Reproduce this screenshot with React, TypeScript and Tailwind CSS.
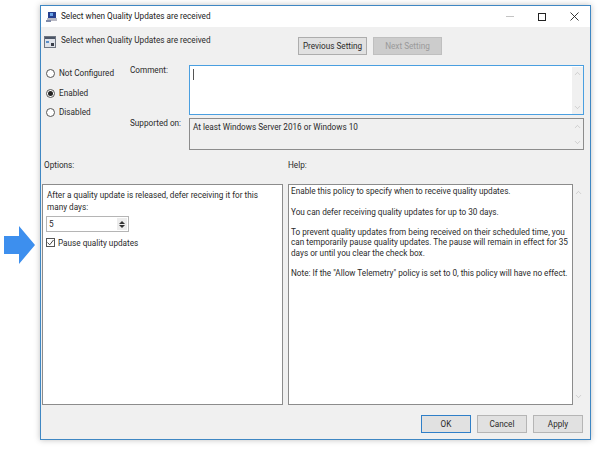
import React from 'react';
import { ChevronUp, ChevronDown } from 'lucide-react';

const Radio = ({ label, checked }: { label: string; checked?: boolean }) => (
  <div className="flex items-center gap-[4px] h-[19.5px]">
    <div className="w-[9px] h-[9px] rounded-full border border-[#555] bg-white flex items-center justify-center">
      {checked && <div className="w-[5px] h-[5px] rounded-full bg-[#222]" />}
    </div>
    <span>{label}</span>
  </div>
);

const ScrollArrows = ({ inset }: { inset: string }) => (
  <div className={`w-[11px] shrink-0 flex flex-col justify-between items-center bg-[#f0f0f0] ${inset}`}>
    <ChevronUp size={9} className="text-[#b4b4b4]" strokeWidth={1.5} />
    <ChevronDown size={9} className="text-[#b4b4b4]" strokeWidth={1.5} />
  </div>
);

const FootButton = ({ label, active }: { label: string; active?: boolean }) => (
  <div className={`w-[50px] h-[18px] flex items-center justify-center bg-[#e1e1e1] border ${active ? 'border-[#2f7fc8]' : 'border-[#b5b5b5]'}`}>
    {label}
  </div>
);

export default function App() {
  return (
    <div className="relative w-[599px] h-[450px] bg-white overflow-hidden pl-[40px] pt-[5px] text-[8.2px] leading-[11px] text-[#2a2a2a]" style={{ fontFamily: 'Roboto, sans-serif' }}>
      {/* arrow in the margin */}
      <svg className="absolute left-[4px] top-[226px]" width="32" height="40" viewBox="0 0 32 40">
        <path d="M0 10H15V0L31 19L15 38V28H0Z" fill="#3d8fee" />
      </svg>

      <div className="w-[551px] h-[435px] bg-[#f0f0f0] border border-[#3f87c3] shadow-[0_0_6px_rgba(0,0,0,0.25)] flex flex-col">
        {/* title bar */}
        <div className="h-[21px] bg-white flex items-center pl-[5px] pr-[11px] shrink-0">
          <svg width="12" height="12" viewBox="0 0 12 12" className="mr-[3px]">
            <rect x="2" y="1" width="8" height="6" fill="#27408f" />
            <rect x="4" y="2" width="3" height="3" fill="#6aa3e8" />
            <rect x="1" y="7" width="10" height="3" fill="#b9b9c4" />
            <rect x="0" y="9" width="5" height="2" fill="#7f8aa8" />
          </svg>
          <span className="text-[#222]">Select when Quality Updates are received</span>
          <div className="ml-auto flex items-center gap-[24px]">
            <div className="w-[8px] h-px bg-[#c4c4c4]" />
            <div className="w-[8px] h-[8px] border border-[#222]" />
            <svg width="9" height="9" viewBox="0 0 9 9"><path d="M0.5 0.5L8.5 8.5M8.5 0.5L0.5 8.5" stroke="#222" strokeWidth="0.9" /></svg>
          </div>
        </div>

        {/* heading and nav buttons */}
        <div className="flex items-start pl-[3px] pt-[10px] h-[38px] shrink-0">
          <svg width="12" height="12" viewBox="0 0 12 12" className="mr-[5px] shrink-0 -mt-[1px]">
            <rect x="0.5" y="0.5" width="11" height="11" fill="#dfe3ea" stroke="#6f7682" />
            <rect x="1" y="1" width="10" height="2" fill="#4c5566" />
            <rect x="2" y="5" width="3" height="2" fill="#5b8fc9" />
            <rect x="7" y="7" width="3" height="3" fill="#3a3f4a" />
          </svg>
          <span className="-mt-[2px] w-[237px] shrink-0">Select when Quality Updates are received</span>
          <div className="flex gap-[6px]">
            <div className="w-[69px] h-[18px] flex items-center justify-center bg-[#e1e1e1] border border-[#adadad]">Previous Setting</div>
            <div className="w-[69px] h-[18px] flex items-center justify-center bg-[#cccccc] border border-[#bfbfbf] text-[#9a9a9a]">Next Setting</div>
          </div>
        </div>

        {/* state and comment */}
        <div className="flex pl-[5px] pr-[6px] shrink-0">
          <div className="w-[84px] shrink-0 -mt-[1px]">
            <Radio label="Not Configured" />
            <Radio label="Enabled" checked />
            <Radio label="Disabled" />
          </div>
          <div className="flex-1 flex flex-col gap-[3px]">
            <div className="flex">
              <div className="w-[59px] shrink-0">Comment:</div>
              <div className="flex-1 h-[50px] bg-white border border-[#4a9fe0] flex justify-between pl-[3px] pt-[3px]">
                <div className="w-px h-[11px] bg-[#555]" />
                <ScrollArrows inset="py-[2px] -mt-[2px]" />
              </div>
            </div>
            <div className="flex">
              <div className="w-[59px] shrink-0">Supported on:</div>
              <div className="flex-1 h-[32px] bg-[#f0f0f0] border border-[#8c8c8c] flex justify-between pl-[3px] pt-[3px]">
                <span>At least Windows Server 2016 or Windows 10</span>
                <ScrollArrows inset="py-[2px] -mt-[2px]" />
              </div>
            </div>
          </div>
        </div>

        {/* section labels */}
        <div className="flex pl-[3px] pt-[10px] h-[34px] shrink-0">
          <div className="w-[244px]">Options:</div>
          <div>Help:</div>
        </div>

        {/* panels */}
        <div className="flex pl-[1px] pr-[6px] h-[221px] shrink-0">
          <div className="w-[241px] bg-white border border-[#8c8c8c] pl-[3px] pr-[12px] pt-[4px] shrink-0 leading-[12px]">
            <p className="pl-[1px]">After a quality update is released, defer receiving it for this many days:</p>
            <div className="mt-[3px] w-[83px] h-[16px] border border-[#b5b5b5] flex justify-between items-stretch pl-[2px] pr-[1px]">
              <span className="leading-[14px]">5</span>
              <div className="w-[10px] flex flex-col justify-center items-center gap-[1px] bg-[#ececec] my-[1px]">
                <div className="w-0 h-0 border-x-[3px] border-x-transparent border-b-[3px] border-b-[#333]" />
                <div className="w-0 h-0 border-x-[3px] border-x-transparent border-t-[3px] border-t-[#333]" />
              </div>
            </div>
            <div className="mt-[5px] flex items-center gap-[3px] h-[11px]">
              <div className="w-[9px] h-[9px] border border-[#555] bg-white flex items-center justify-center">
                <svg width="7" height="7" viewBox="0 0 7 7"><path d="M0.5 3.5L2.7 5.8L6.5 1" stroke="#333" strokeWidth="0.9" fill="none" /></svg>
              </div>
              <span>Pause quality updates</span>
            </div>
          </div>
          <div className="w-[5px] shrink-0" />
          <div className="flex-1 bg-white border border-[#8c8c8c] pl-[2px] pr-[2px] pt-[1px] leading-[10.3px]">
            <p>Enable this policy to specify when to receive quality updates.</p>
            <p className="mt-[10.3px]">You can defer receiving quality updates for up to 30 days.</p>
            <p className="mt-[10.3px]">To prevent quality updates from being received on their scheduled time, you can temporarily pause quality updates. The pause will remain in effect for 35 days or until you clear the check box.</p>
            <p className="mt-[10.3px]">Note: If the "Allow Telemetry" policy is set to 0, this policy will have no effect.</p>
          </div>
          <ScrollArrows inset="py-[4px]" />
        </div>

        {/* footer */}
        <div className="flex justify-end gap-[6px] pr-[7px] pt-[10px]">
          <FootButton label="OK" active />
          <FootButton label="Cancel" />
          <FootButton label="Apply" />
        </div>
      </div>
    </div>
  );
}
